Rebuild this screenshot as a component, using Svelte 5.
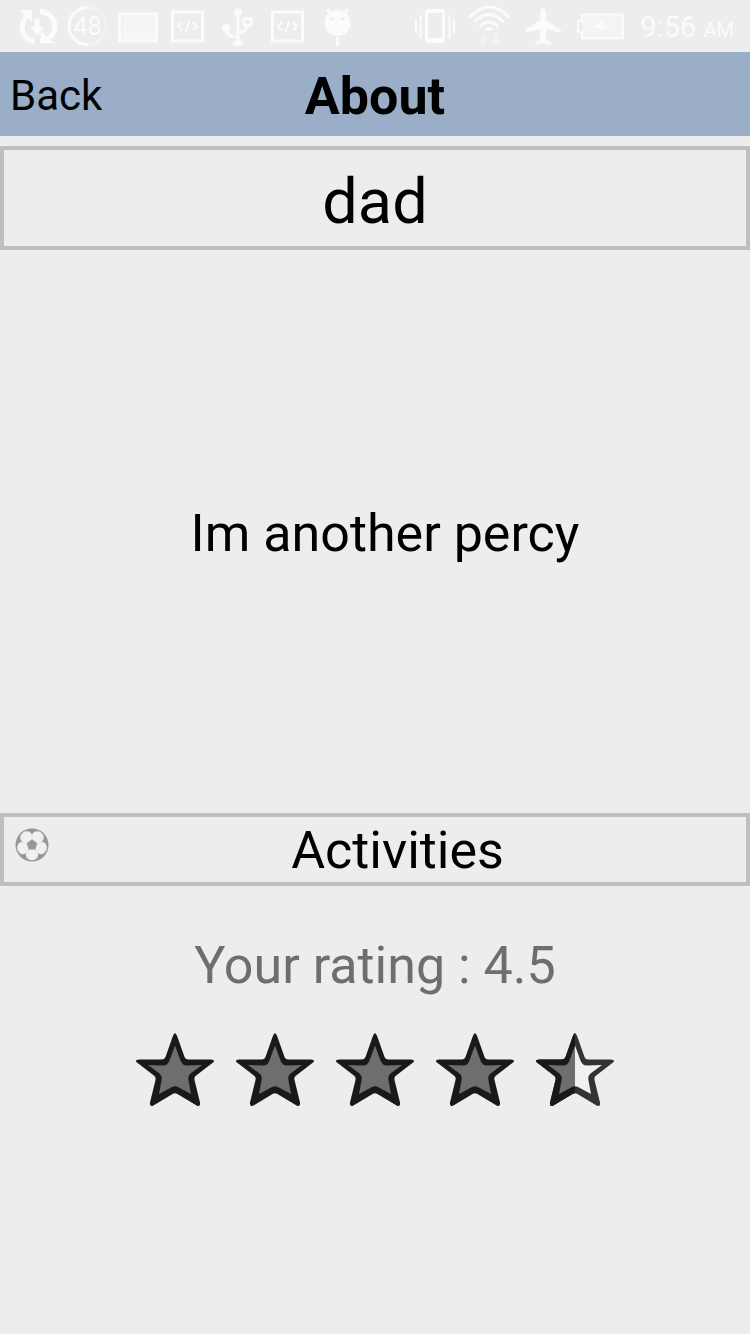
<script>
  const name = 'dad';
  const bio = 'Im another percy';
  const rating = 4.5;
  const stars = [1, 2, 3, 4, 5].map((n) => (rating >= n ? 'full' : rating >= n - 0.5 ? 'half' : 'empty'));
  const starPath =
    'M50 7 Q51.300 7.500 52.300 10.500 L59.500 31 Q60.500 33.500 63.500 33.500 L86 33.500 Q91 34 88 36.500 L70.500 50 Q68.800 51.500 69.500 54 L75 76.500 Q75.500 81 72 79.800 L52 67.800 Q50 66.700 48 67.800 L28 79.800 Q24.500 81 25 76.500 L30.500 54 Q31.200 51.500 29.500 50 L12 36.500 Q9 34 14 33.500 L36.500 33.500 Q39.500 33.500 40.500 31 L47.700 10.500 Q48.700 7.500 50 7 Z';
  const innerPath =
    'M50 19.500 L55.300 34 Q57 39.500 62 39.500 L77 39 L65.500 47.500 Q62.500 50 63.500 54.500 L66 68 L53 61 Q50 59.500 47 61 L34 68 L36.500 54.500 Q37.500 50 34.500 47.500 L23 39 L38 39.500 Q43 39.500 44.700 34 Z';
  const patches = [0, 72, 144, 216, 288];
</script>

{#snippet codeIcon()}
  <svg class="icon" viewBox="0 0 50 52" aria-hidden="true">
    <rect x="9.500" y="12" width="30" height="29" class="line" />
    <path class="line thin" d="M19 22.500 L15 26.500 L19 30.500 M30 22.500 L34 26.500 L30 30.500 M26.500 21 L22.500 32" />
  </svg>
{/snippet}

<div class="screen">
  <div class="status">
    <div class="group">
      <svg class="icon" viewBox="0 0 50 52" aria-hidden="true">
        <path class="line thick" d="M17.500 14 A14.500 14.500 0 0 0 22 41.500 M27 41 A14.500 14.500 0 0 0 27 11.500" />
        <path class="solid" d="M6 10 H19 V22 Z M41 43 H28 V31 Z M21.500 19 h5 v8 h5 l-7.500 8 -7.500 -8 h5z" />
      </svg>
      <svg class="icon" viewBox="0 0 50 52" aria-hidden="true">
        <circle class="line faint" cx="24.500" cy="26" r="18.500" />
        <path class="line" d="M24.500 7.500 A18.500 18.500 0 0 0 24.500 44.500" />
        <text x="24.500" y="35" text-anchor="middle">48</text>
      </svg>
      <svg class="icon" viewBox="0 0 50 52" aria-hidden="true">
        <rect class="tint" x="7" y="15" width="37" height="25" />
        <rect class="line" x="6.500" y="14" width="37" height="27" />
        <path class="line hair" d="M12.500 17 V34 H41 M9 37 H41" />
      </svg>
      {@render codeIcon()}
      <svg class="icon" viewBox="0 0 50 52" aria-hidden="true">
        <path class="line" d="M25 12 V42 M13 28 C13 35 18 37 25 37 M34 24 C34 31 30 32 25 32" />
        <circle class="solid" cx="25" cy="12.500" r="4" />
        <circle class="solid" cx="13" cy="28" r="4" />
        <circle class="line" cx="34.500" cy="22" r="4" />
        <ellipse class="solid" cx="25" cy="43" rx="4.500" ry="3" />
      </svg>
      {@render codeIcon()}
      <svg class="icon" viewBox="0 0 50 52" aria-hidden="true">
        <circle class="solid" cx="24.500" cy="23" r="13" />
        <path class="line" d="M14 9 L18 14 M35 9 L31 14 M24.500 37 V46" />
        <circle class="hole" cx="19.500" cy="19" r="1.800" />
        <circle class="hole" cx="29.500" cy="19" r="1.800" />
      </svg>
    </div>
    <div class="group">
      <svg class="icon wide" viewBox="0 0 54 52" aria-hidden="true">
        <path class="solid" fill-rule="evenodd" d="M20 9 h14 q3 0 3 3 v28 q0 3 -3 3 h-14 q-3 0 -3 -3 v-28 q0 -3 3 -3z M20 13 v25 h14 v-25z" />
        <path class="line thin" d="M12.500 15 V38 M41.500 15 V38 M8 19 V33 M46 19 V33" />
      </svg>
      <svg class="icon wide" viewBox="0 0 54 52" aria-hidden="true">
        <path class="line" d="M7.500 17 Q27 -3 47 17 M12.500 22 Q27 7 41.500 22 M17.500 27 Q27 17 36.500 27" />
        <path class="solid" d="M22 29.500 Q27 24.500 32 29.500 L27 31z" />
        <path class="solid faint" d="M21 34 l5 5 h-3 v6 h-4 v-6 h-3z M34 45 l5 -5 h-3 v-6 h-4 v6 h-3z" />
      </svg>
      <svg class="icon wide" viewBox="0 0 54 52" aria-hidden="true">
        <path class="solid" d="M27 8 q3 1 3 5 v7 l15 10 v3 l-15 -4 v10 l5 4 v2 l-8 -2 -8 2 v-2 l5 -4 v-10 l-15 4 v-3 l15 -10 v-7 q0 -4 3 -5z" />
      </svg>
      <svg class="icon wide" viewBox="0 0 54 52" aria-hidden="true">
        <path class="tint" d="M12 15 H52 V38 H12z" />
        <path class="line thin" d="M12 14.500 H53 V38.500 H12 V32 H8 V21 H12z" />
        <path class="solid" d="M33 18 L24 28 h6 l-2 7 10 -10 h-6z" />
      </svg>
      <time class="clock">9:56 <small>AM</small></time>
    </div>
  </div>

  <header>
    <button type="button" class="back">Back</button>
    <h1>About</h1>
  </header>

  <main>
    <h2 class="name">{name}</h2>
    <p class="bio">{bio}</p>
    <button type="button" class="activities">
      <svg viewBox="0 0 34 34" aria-hidden="true">
        <circle cx="17" cy="17" r="16.500" fill="#979797" />
        {#each patches as angle}
          <path
            transform="rotate({angle} 17 17)"
            fill="#f0f0f0"
            d="M14.800 21.500 H19.200 Q20.800 21.700 21.800 23.200 L23 25.800 Q23.600 28 22.200 29.900 Q20 32.300 17 32.300 Q14 32.300 11.800 29.900 Q10.400 28 11 25.800 L12.200 23.200 Q13.200 21.700 14.800 21.500z"
          />
        {/each}
      </svg>
      <span>Activities</span>
    </button>
    <p class="rating">Your rating : {rating}</p>
    <div class="stars" role="img" aria-label="{rating} of 5 stars">
      {#each stars as kind}
        <svg viewBox="0 0 100 90">
          <path d={starPath} fill={kind === 'full' ? '#191919' : '#333'} />
          <path d={innerPath} fill={kind === 'full' ? '#6e6e6e' : '#f1f1f1'} />
          {#if kind === 'half'}
            <g class="left">
              <path d={starPath} fill="#191919" />
              <path d={innerPath} fill="#6e6e6e" />
            </g>
          {/if}
        </svg>
      {/each}
    </div>
  </main>
</div>

<style>
  :global(body) {
    margin: 0;
    background: #ededed;
  }
  .screen {
    min-height: 100vh;
    display: flex;
    flex-direction: column;
    background: #ededed;
    color: #000;
    font-family: Roboto, sans-serif;
  }
  .status {
    height: 52px;
    padding: 0 16px 0 13px;
    display: flex;
    justify-content: space-between;
    color: #fbfbfb;
  }
  .group {
    display: flex;
    align-items: center;
  }
  .icon {
    width: 50px;
    height: 52px;
  }
  .icon.wide {
    width: 54px;
  }
  .icon text {
    font-size: 25px;
    fill: currentColor;
  }
  .solid {
    fill: currentColor;
  }
  .line {
    fill: none;
    stroke: currentColor;
    stroke-width: 3px;
  }
  .thick {
    stroke-width: 5px;
  }
  .thin {
    stroke-width: 2px;
  }
  .hair {
    stroke-width: 1px;
  }
  .tint {
    fill: #f4f4f4;
  }
  .hole {
    fill: #ededed;
  }
  .faint {
    opacity: 0.4;
  }
  .clock {
    margin-left: 16px;
    padding-top: 4px;
    font-size: 29px;
    line-height: 52px;
    white-space: nowrap;
  }
  .clock small {
    font-size: 20px;
  }
  header {
    height: 84px;
    display: grid;
    grid-template-columns: 1fr auto 1fr;
    align-items: center;
    background: #9aaec8;
  }
  button {
    border: 0;
    padding: 0;
    background: none;
    color: inherit;
    font: inherit;
    cursor: pointer;
  }
  .back {
    justify-self: start;
    padding: 4px 10px 0;
    font-size: 42px;
    line-height: 80px;
  }
  h1,
  h2,
  p {
    margin: 0;
    text-align: center;
  }
  h1 {
    padding-top: 6px;
    font-size: 52px;
    line-height: 78px;
    font-weight: 700;
  }
  main {
    flex: 1;
    display: flex;
    flex-direction: column;
    padding-top: 10px;
  }
  .name {
    border: 4px solid #bfbfbf;
    padding-top: 8px;
    font-size: 63px;
    line-height: 88px;
    font-weight: 400;
  }
  .bio {
    min-height: 559px;
    padding: 4px 0 0 20px;
    display: flex;
    align-items: center;
    justify-content: center;
    font-size: 52px;
    line-height: 64px;
  }
  .activities {
    display: flex;
    align-items: flex-start;
    border: 4px solid #bfbfbf;
    padding-left: 11px;
    font-size: 52px;
  }
  .activities svg {
    width: 34px;
    height: 34px;
    margin-top: 11px;
  }
  .activities span {
    flex: 1;
    padding-top: 3px;
    line-height: 62px;
  }
  .rating {
    margin-top: 48px;
    color: #6e6e6e;
    font-size: 52px;
    line-height: 64px;
  }
  .stars {
    margin-top: 28px;
    display: flex;
    justify-content: center;
  }
  .stars svg {
    width: 100px;
    height: 90px;
  }
  .left {
    clip-path: view-box polygon(0 0, 50% 0, 50% 100%, 0 100%);
  }
</style>
